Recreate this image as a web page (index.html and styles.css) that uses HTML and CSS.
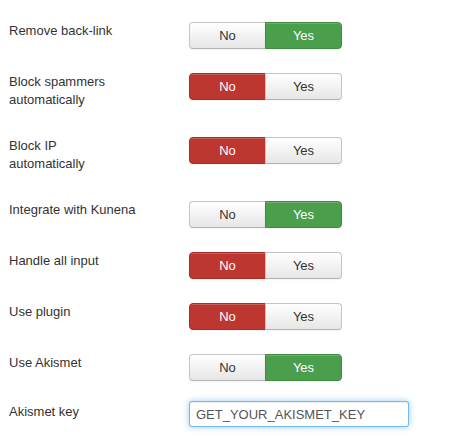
FILE: index.html
```html
<!DOCTYPE html>
<html lang="en">
<head>
  <meta charset="UTF-8" />
  <title>Anti-spam settings</title>
  <link rel="stylesheet" href="styles.css">
</head>
<body>
  <form class="settings">
    <div class="control-group">
      <label class="control-label">Remove back-link</label>
      <div class="btn-group">
        <button type="button" class="btn">No</button>
        <button type="button" class="btn btn-yes">Yes</button>
      </div>
    </div>

    <div class="control-group">
      <label class="control-label">Block spammers<br>automatically</label>
      <div class="btn-group">
        <button type="button" class="btn btn-no">No</button>
        <button type="button" class="btn">Yes</button>
      </div>
    </div>

    <div class="control-group">
      <label class="control-label">Block IP<br>automatically</label>
      <div class="btn-group">
        <button type="button" class="btn btn-no">No</button>
        <button type="button" class="btn">Yes</button>
      </div>
    </div>

    <div class="control-group">
      <label class="control-label">Integrate with Kunena</label>
      <div class="btn-group">
        <button type="button" class="btn">No</button>
        <button type="button" class="btn btn-yes">Yes</button>
      </div>
    </div>

    <div class="control-group">
      <label class="control-label">Handle all input</label>
      <div class="btn-group">
        <button type="button" class="btn btn-no">No</button>
        <button type="button" class="btn">Yes</button>
      </div>
    </div>

    <div class="control-group">
      <label class="control-label">Use plugin</label>
      <div class="btn-group">
        <button type="button" class="btn btn-no">No</button>
        <button type="button" class="btn">Yes</button>
      </div>
    </div>

    <div class="control-group last">
      <label class="control-label">Use Akismet</label>
      <div class="btn-group">
        <button type="button" class="btn">No</button>
        <button type="button" class="btn btn-yes">Yes</button>
      </div>
    </div>

    <div class="control-group input-row">
      <label class="control-label" for="akismetKey">Akismet key</label>
      <input type="text" id="akismetKey" class="text-input" value="GET_YOUR_AKISMET_KEY" />
    </div>
  </form>
</body>
</html>
```

FILE: styles.css
```css
body {
  margin: 0;
  padding: 22px 0 0 9px;
  background: #fff;
  font-family: "Liberation Sans", Arial, sans-serif;
  font-size: 13px;
  line-height: 18px;
  color: #333;
}
.control-group {
  display: flex;
  align-items: flex-start;
  margin-bottom: 24px;
}
.control-group.last {
  margin-bottom: 20px;
}
.control-group.input-row {
  align-items: center;
}
.control-label {
  width: 180px;
  flex: none;
  padding-bottom: 4px;
}
.btn-group {
  display: flex;
}
.btn {
  width: 77px;
  height: 27px;
  margin: 0;
  padding: 0;
  font-family: inherit;
  font-size: 13px;
  color: #333;
  background: linear-gradient(#fff, #e6e6e6);
  border: 1px solid #c5c5c5;
  border-bottom-color: #b3b3b3;
  box-shadow: inset 0 1px 0 rgba(255,255,255,0.2), 0 1px 2px rgba(0,0,0,0.05);
}
.btn:first-child {
  border-radius: 4px 0 0 4px;
}
.btn:last-child {
  border-radius: 0 4px 4px 0;
  margin-left: -1px;
}
.btn-yes {
  background: #4a9e4c;
  border-color: #3f8c3f;
  color: #fff;
}
.btn-no {
  background: #bd362f;
  border-color: #a52e28;
  color: #fff;
}
.text-input {
  box-sizing: border-box;
  width: 220px;
  height: 26px;
  margin: 0;
  padding: 4px 6px;
  font-family: inherit;
  font-size: 13px;
  color: #555;
  border: 1px solid rgba(82,168,236,0.8);
  border-radius: 3px;
  box-shadow: inset 0 1px 1px rgba(0,0,0,0.075), 0 0 6px rgba(82,168,236,0.6);
  outline: none;
}
```
